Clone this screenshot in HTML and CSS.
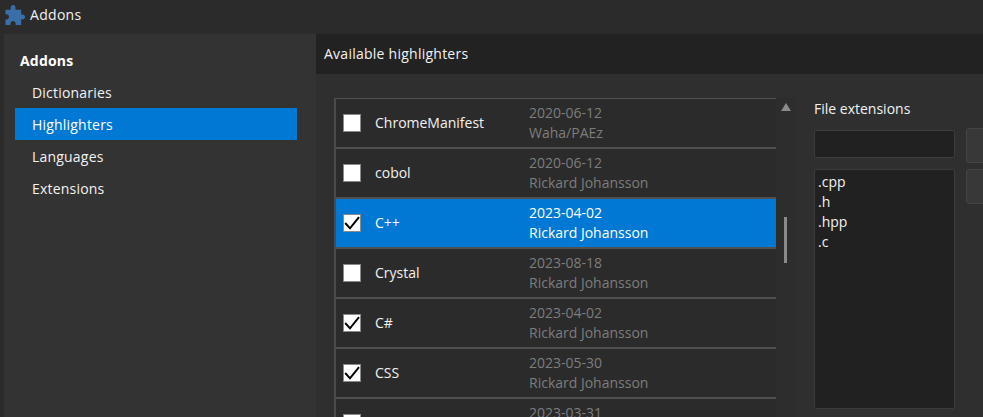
FILE: index.html
```html
<!DOCTYPE html>
<html lang="en">
<head>
<meta charset="utf-8">
<title>Addons</title>
<link rel="stylesheet" href="styles.css">
</head>
<body>
<div class="window">
  <header class="titlebar">
    <svg class="app-icon" viewBox="2 1 21 21" aria-hidden="true"><path d="M20.5 11H19V6H13V3.5C13 2.12 11.88 1 10.5 1S8 2.12 8 3.5V6H2.5v4.8H3.5c1.49 0 2.7 1.21 2.7 2.7s-1.21 2.7-2.7 2.7H2.5V22H7.8v-1.5c0-1.49 1.21-2.7 2.7-2.7 1.49 0 2.7 1.21 2.7 2.7V22H19v-6h1.500c1.38 0 2.500-1.120 2.500-2.500S21.880 11 20.500 11z"/></svg>
    <span>Addons</span>
  </header>
  <div class="main">
    <nav class="sidebar">
      <div class="nav-title">Addons</div>
      <a class="nav-item">Dictionaries</a>
      <a class="nav-item selected">Highlighters</a>
      <a class="nav-item">Languages</a>
      <a class="nav-item">Extensions</a>
    </nav>
    <section class="panel">
      <div class="panel-header">Available highlighters</div>
      <div class="panel-body">
        <div class="list-wrap">
          <div class="list">
            <div class="row"><span class="check"></span><span class="name">ChromeManifest</span><div class="meta"><div>2020-06-12</div><div>Waha/PAEz</div></div></div>
            <div class="row"><span class="check"></span><span class="name">cobol</span><div class="meta"><div>2020-06-12</div><div>Rickard Johansson</div></div></div>
            <div class="row active"><span class="check"><svg viewBox="0 0 16 16"><path d="M1.200 8 6 13.300 15 2.200"/></svg></span><span class="name">C++</span><div class="meta"><div>2023-04-02</div><div>Rickard Johansson</div></div></div>
            <div class="row"><span class="check"></span><span class="name">Crystal</span><div class="meta"><div>2023-08-18</div><div>Rickard Johansson</div></div></div>
            <div class="row"><span class="check"><svg viewBox="0 0 16 16"><path d="M1.200 8 6 13.300 15 2.200"/></svg></span><span class="name">C#</span><div class="meta"><div>2023-04-02</div><div>Rickard Johansson</div></div></div>
            <div class="row"><span class="check"><svg viewBox="0 0 16 16"><path d="M1.200 8 6 13.300 15 2.200"/></svg></span><span class="name">CSS</span><div class="meta"><div>2023-05-30</div><div>Rickard Johansson</div></div></div>
            <div class="row"><span class="check"></span><span class="name"></span><div class="meta"><div>2023-03-31</div><div>Rickard Johansson</div></div></div>
          </div>
          <div class="scrollbar">
            <span class="arrow"></span>
            <span class="thumb"></span>
          </div>
        </div>
        <div class="extensions">
          <div class="ext-label">File extensions</div>
          <div class="ext-grid">
            <div class="ext-field"></div>
            <div class="ext-btn"></div>
            <div class="ext-list"><div>.cpp</div><div>.h</div><div>.hpp</div><div>.c</div></div>
            <div class="ext-btn"></div>
          </div>
        </div>
      </div>
    </section>
  </div>
</div>
</body>
</html>
```
FILE: styles.css
```css
* { box-sizing: border-box; }
html, body { margin: 0; height: 100%; overflow: hidden; }
body {
  background: #2b2b2b;
  color: #f2f2f2;
  font-family: "Open Sans", "Noto Sans", sans-serif;
  font-size: 14px;
}
.window { width: 983px; height: 417px; display: flex; flex-direction: column; overflow: hidden; }
.titlebar {
  height: 34px; flex: none; display: flex; align-items: center; gap: 5px; padding: 0 0 6px 5px;
  background: #2b2b2b; letter-spacing: .3px;
}
.app-icon { width: 20px; height: 20px; margin-top: 2px; fill: #3a6ea8; }
.main { flex: 1; display: flex; min-height: 0; padding-left: 4px; }
.sidebar { width: 312px; flex: none; background: #333333; padding: 14px 19px 0 11px; letter-spacing: .2px; }
.nav-title { height: 28px; line-height: 26px; padding-left: 5px; font-weight: 700; color: #fff; }
.nav-item { display: block; height: 32px; line-height: 34px; padding-left: 17px; }
.nav-item.selected { background: #0078d4; color: #fff; }
.panel { flex: 1; min-width: 0; display: flex; flex-direction: column; background: #2f2f2f; }
.panel-header { height: 40px; flex: none; line-height: 40px; padding-left: 8px; background: #222222; letter-spacing: .25px; }
.panel-body { flex: 1; min-height: 0; display: flex; padding: 24px 0 0 18px; overflow: hidden; }
.list-wrap { width: 462px; flex: none; display: flex; }
.list { width: 442px; flex: none; border-top: 1px solid #505050; border-left: 2px solid #4a4a4a; background: #2b2b2b; height: 340px; }
.row { height: 50px; display: flex; align-items: center; border-bottom: 2px solid #505050; padding-left: 7px; }
.row.active { background: #0078d4; color: #fff; }
.check { width: 18px; height: 18px; flex: none; background: #fff; border: 1px solid #8a8a8a; }
.check svg { display: block; width: 16px; height: 16px; fill: none; stroke: #000; stroke-width: 2; }
.name { width: 154px; flex: none; margin: 0 0 2px 14px; }
.meta { line-height: 20px; color: #7d7d7d; }
.row.active .meta { color: #fff; }
.scrollbar { width: 20px; flex: none; position: relative; background: #2d2d2d; }
.arrow { position: absolute; left: 5px; top: 5px; width: 0; height: 0; border-left: 5px solid transparent; border-right: 5px solid transparent; border-bottom: 8px solid #8a8a8a; }
.thumb { position: absolute; left: 8px; top: 119px; width: 3px; height: 46px; background: #8a8a8a; }
.extensions { margin-left: 18px; flex: none; width: 200px; }
.ext-label { height: 32px; line-height: 22px; }
.ext-grid { display: grid; grid-template-columns: 141px 40px; column-gap: 11px; row-gap: 6px; align-items: start; }
.ext-field { height: 28px; background: #212121; border: 1px solid #3c3c3c; border-radius: 2px; }
.ext-btn { height: 35px; background: #383838; border: 1px solid #444444; border-radius: 3px; }
.ext-grid .ext-btn:nth-child(2) { margin-top: -2px; }
.ext-list { height: 240px; background: #212121; border: 1px solid #3c3c3c; border-radius: 2px; padding: 2px 3px; line-height: 20px; }
```
